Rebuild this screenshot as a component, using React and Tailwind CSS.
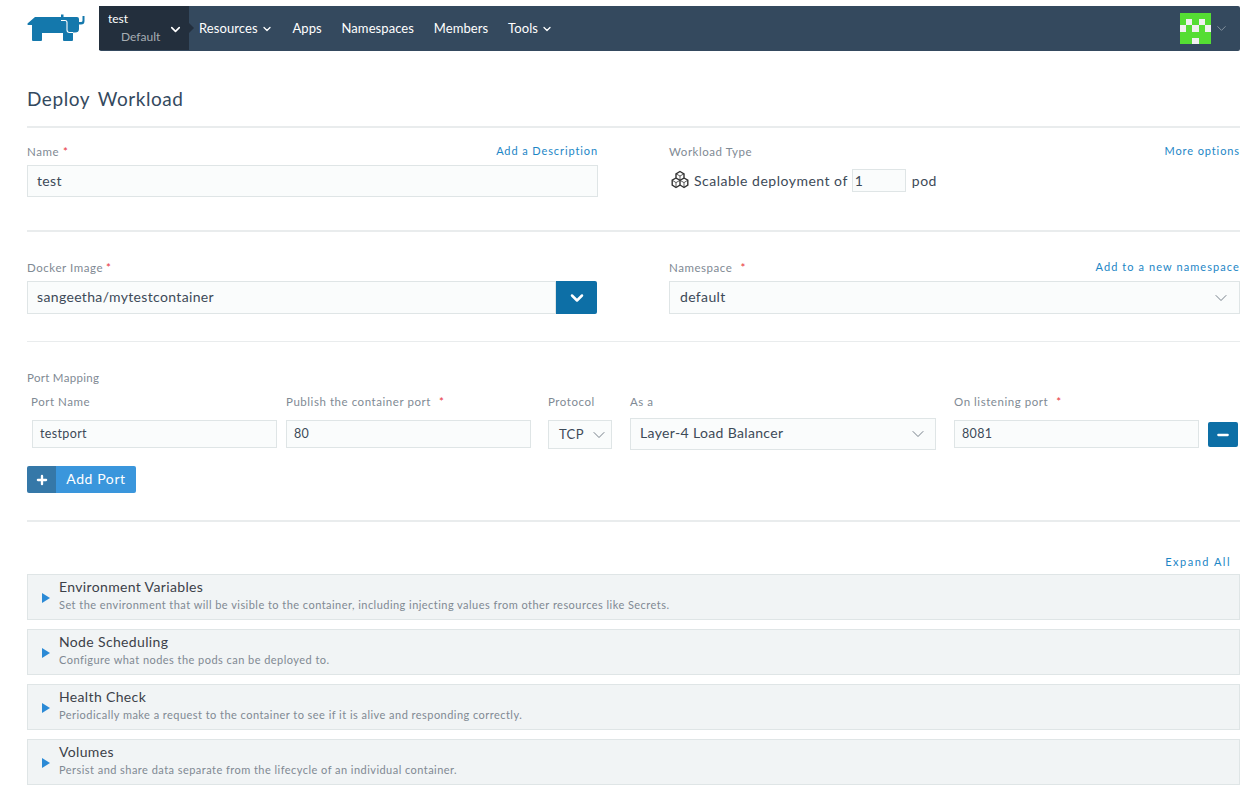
import React from 'react';
import { ChevronDown, Plus, Minus } from 'lucide-react';

const font = "font-['Lato','Noto_Sans',sans-serif]";

function Logo() {
  return (
    <svg width="60" height="30" viewBox="0 0 60 30" className="mt-[8px] -ml-px shrink-0">
      <path d="M1.5 9.5 L9 3 H35 V0.5 H37.5 V3 H51 Q53 3 53 5 V8 H55 Q56.5 8 56.5 6.5 V2 H58.5 V7 Q58.5 10.5 55 10.5 H53 V15 Q53 18.5 49 18.5 H47 V26 Q47 27 46 27 H38 Q37 27 37 26 V19 H16 V26 Q16 27 15 27 H7 Q6 27 6 26 V11 H2.5 Q1 11 1.5 9.5 Z" fill="#1478ac" />
      <path d="M35 6.5 H39 Q41 6.5 41 8.5 V16 Q41 18.5 43.5 18.5 H47" stroke="#fff" strokeWidth="1.1" fill="none" />
    </svg>
  );
}

function Identicon() {
  const cells = [
    '00000',
    '01010',
    '10101',
    '00000',
    '00100',
  ];
  return (
    <div className="grid grid-cols-5 w-[31px] h-[31px] bg-[#55dd33]">
      {cells.join('').split('').map((c, i) => (
        <div key={i} className={c === '1' ? 'bg-[#f0f0f0]' : ''} />
      ))}
    </div>
  );
}

function NavItem({ text, caret }) {
  return (
    <div className="flex items-center gap-[3px] text-[13px] tracking-[0.08px] text-white">
      {text}
      {caret && <ChevronDown size={12} strokeWidth={2.6} />}
    </div>
  );
}

function Label({ text, required, gap = 'ml-1' }) {
  return (
    <div className="text-[11.5px] leading-[14px] text-[#7f8a94] tracking-[0.55px]">
      {text}
      {required && <span className={`${gap} text-[#e8343a]`}>*</span>}
    </div>
  );
}

function Field({ value, className = '', small }) {
  return (
    <div className={`flex items-center border border-[#dfe5e6] bg-[#fafcfc] text-[#3d4a58] ${small ? 'h-[28px] text-[12.5px] pl-[7px]' : 'h-[32px] text-[14px] pl-[9px] pb-[2px]'} tracking-[0.35px] ${className}`}>
      {value}
    </div>
  );
}

function SelectBox({ value, className = '', iconSize = 20, textClass = 'text-[14px] pb-[2px]' }) {
  return (
    <div className={`flex items-center justify-between border border-[#dfe5e6] bg-[#fafcfc] text-[#3d4a58] tracking-[0.35px] ${className}`}>
      <span className={textClass}>{value}</span>
      <ChevronDown size={iconSize} strokeWidth={1} className="text-[#5d6873]" />
    </div>
  );
}

function Link({ text, className = 'tracking-[0.9px]' }) {
  return <div className={`text-[11px] leading-[14px] text-[#1c86c6] ${className}`}>{text}</div>;
}

function Panel({ title, detail }) {
  return (
    <div className="flex items-center h-[46px] border border-[#dfe5e6] bg-[#f1f4f5]">
      <div className="w-0 h-0 ml-[14px] mr-[9px] border-y-[5px] border-y-transparent border-l-[8px] border-l-[#2b8ad6] translate-y-px" />
      <div className="pb-[3px]">
        <div className="text-[14px] leading-[16px] text-[#3c4149] tracking-[0.35px]">{title}</div>
        <div className="text-[11px] leading-[14px] mt-[3px] text-[#808993] tracking-[0.46px]">{detail}</div>
      </div>
    </div>
  );
}

function Rule({ className = '' }) {
  return <div className={`h-[2px] bg-[#e9eced] ${className}`} />;
}

export default function App() {
  return (
    <div className={`${font} min-h-screen bg-white pl-[27px] pr-5 pt-[6px] pb-[3px]`}>
      {/* Header */}
      <div className="flex">
        <div className="w-[72px]"><Logo /></div>
        <div className="flex flex-1 h-[45px] items-center bg-[#34495e] rounded-[2px]">
          <div className="relative flex h-[44px] self-start w-[90px] bg-[#232f3d] text-white">
            <div className="pl-[9px] pt-[6px] text-[12px] leading-[14px]">
              test
              <div className="pl-[13px] pt-[4px] text-[#a7adb3]">Default</div>
            </div>
            <ChevronDown size={15} strokeWidth={2.6} className="absolute right-[6px] top-[16px]" />
            <div className="absolute left-[90px] top-[17px] w-0 h-0 border-y-[5px] border-y-transparent border-l-[5px] border-l-[#232f3d]" />
          </div>
          <div className="flex items-center gap-[19.8px] ml-[10px]">
            <NavItem text="Resources" caret />
            <NavItem text="Apps" />
            <NavItem text="Namespaces" />
            <NavItem text="Members" />
            <NavItem text="Tools" caret />
          </div>
          <div className="ml-auto flex items-center gap-[3px] pr-[11px]">
            <Identicon />
            <ChevronDown size={15} strokeWidth={1.5} className="text-[#8794a1]" />
          </div>
        </div>
      </div>

      {/* Title */}
      <h1 className="mt-[35px] text-[19px] leading-[26px] text-[#34495e] tracking-[0.55px] [word-spacing:3px]">Deploy Workload</h1>
      <Rule className="mt-[14px]" />

      {/* Name + workload type */}
      <div className="grid grid-cols-[571px_571px] justify-between mt-[17px]">
        <div>
          <div className="flex justify-between">
            <Label text="Name" required />
            <Link text="Add a Description" className="-mt-px tracking-[0.9px]" />
          </div>
          <Field value="test" className="mt-[6px]" />
        </div>
        <div>
          <div className="flex justify-between">
            <Label text="Workload Type" />
            <Link text="More options" className="-mt-px tracking-[0.9px]" />
          </div>
          <div className="flex items-center mt-[6px] pb-[2px] h-[32px] text-[14px] text-[#3d4a58] tracking-[0.5px]">
            <svg width="20" height="20" viewBox="0 0 20 20" fill="none" stroke="#333" strokeWidth="1.4" className="ml-[1px] mr-[4px]">
              <path d="M10 1.5 L14 3.8 V8 L10 10.3 L6 8 V3.8 Z" />
              <path d="M6 8 L2.2 10.2 V15 L6 17.5 L10 15 V10.3" />
              <path d="M14 8 L17.8 10.2 V15 L14 17.5 L10 15" />
              <path d="M6 3.8 L10 6 L14 3.8 M2.2 10.2 L6 12.6 L10 10.3 L14 12.6 L17.8 10.2 M6 12.6 V17 M14 12.6 V17 M10 6 V10" strokeWidth="0.8" />
            </svg>
            Scalable deployment of
            <div className="flex items-center w-[54px] h-[23px] ml-[4px] mr-[5px] pl-[2px] border border-[#dfe5e6] bg-[#fafcfc]">1</div>
            <span className="ml-px">pod</span>
          </div>
        </div>
      </div>
      <Rule className="mt-[33px]" />

      {/* Image + namespace */}
      <div className="grid grid-cols-[570px_571px] justify-between mt-[29px]">
        <div>
          <Label text="Docker Image" required gap="ml-[3px]" />
          <div className="flex mt-[6px]">
            <Field value="sangeetha/mytestcontainer" className="flex-1 h-[33px]" />
            <div className="flex items-center justify-center w-[41px] h-[33px] bg-[#0d6fa6] rounded-r-[2px] text-white">
              <ChevronDown size={20} strokeWidth={3} />
            </div>
          </div>
        </div>
        <div>
          <div className="flex justify-between">
            <Label text="Namespace" required gap="ml-[8px]" />
            <Link text="Add to a new namespace" className="-mt-px tracking-[1.08px]" />
          </div>
          <SelectBox value="default" className="mt-[6px] h-[33px] pl-[10px] pr-[8px]" />
        </div>
      </div>
      <Rule className="mt-[27px] h-px" />

      {/* Port mapping */}
      <div className="mt-[29px] text-[11.5px] leading-[14px] text-[#7f8a94] tracking-[0.3px]">Port Mapping</div>
      <div className="flex mt-[10px] ml-[4px]">
        <div className="w-[246px] mr-[9px]">
          <Label text="Port Name" />
          <Field value="testport" small className="mt-[11px] ml-px" />
        </div>
        <div className="w-[245px] mr-[17px]">
          <Label text="Publish the container port" required gap="ml-[8px]" />
          <Field value="80" small className="mt-[11px]" />
        </div>
        <div className="w-[64px] mr-[18px]">
          <Label text="Protocol" />
          <SelectBox value="TCP" iconSize={20} textClass="text-[13px]" className="mt-[11px] h-[29px] pl-[10px] pr-[2px]" />
        </div>
        <div className="w-[306px] mr-[18px]">
          <Label text="As a" />
          <SelectBox value="Layer-4 Load Balancer" textClass="text-[14px] pb-[4px]" className="mt-[9px] h-[32px] pl-[9px] pr-[7px]" />
        </div>
        <div className="w-[245px]">
          <Label text="On listening port" required gap="ml-[8px]" />
          <Field value="8081" small className="mt-[11px]" />
        </div>
        <div className="w-[30px] ml-[9px] pt-[27px]">
          <div className="flex items-center justify-center h-[25px] bg-[#0d6fa6] rounded-[2px] text-white">
            <Minus size={16} strokeWidth={3.5} />
          </div>
        </div>
      </div>
      <div className="flex w-[109px] h-[27px] mt-[16px] rounded-[2px] overflow-hidden text-white text-[14px] tracking-[0.6px]">
        <div className="flex items-center justify-center w-[29px] bg-[#3578a8]"><Plus size={14} strokeWidth={4} /></div>
        <div className="flex flex-1 items-center justify-center bg-[#3a96dc] pb-[2px]">Add Port</div>
      </div>
      <Rule className="mt-[27px]" />

      {/* Advanced */}
      <Link text="Expand All" className="mt-[33px] mr-[9px] text-right tracking-[1.5px]" />
      <div className="flex flex-col gap-[9px] mt-[5px]">
        <Panel title="Environment Variables" detail="Set the environment that will be visible to the container, including injecting values from other resources like Secrets." />
        <Panel title="Node Scheduling" detail="Configure what nodes the pods can be deployed to." />
        <Panel title="Health Check" detail="Periodically make a request to the container to see if it is alive and responding correctly." />
        <Panel title="Volumes" detail="Persist and share data separate from the lifecycle of an individual container." />
      </div>
    </div>
  );
}
